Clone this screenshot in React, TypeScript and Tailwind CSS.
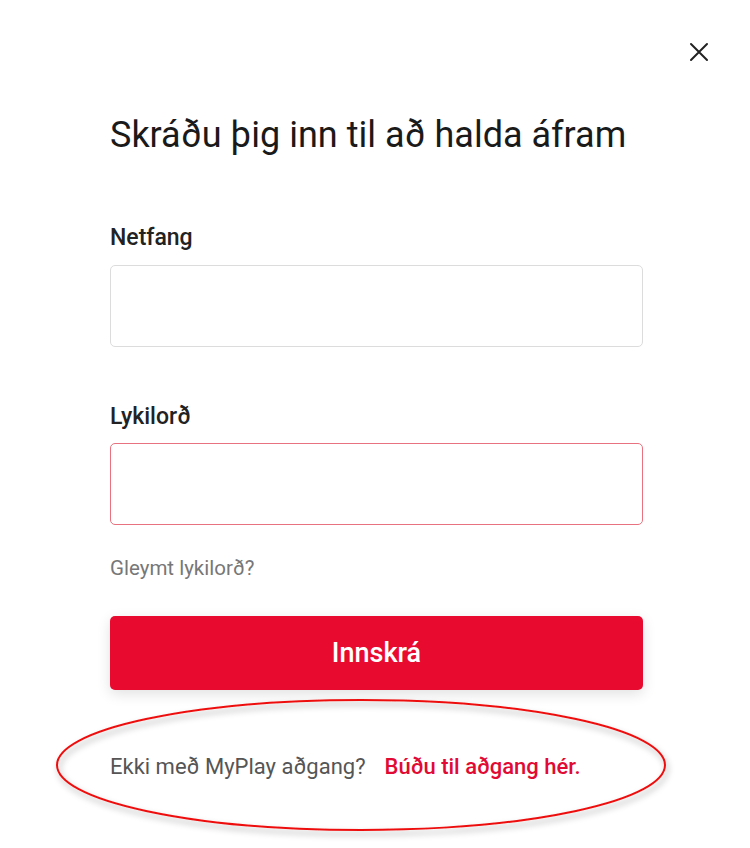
import React from "react";

function CloseIcon() {
  return (
    <svg width="20" height="20" viewBox="0 0 20 20" fill="none">
      <path d="M2 2L18 18M18 2L2 18" stroke="#222" strokeWidth="2" strokeLinecap="round" />
    </svg>
  );
}

function Annotation() {
  // red hand-drawn ellipse around the sign-up text
  return (
    <svg
      className="pointer-events-none absolute left-[50px] top-[694px]"
      width="630"
      height="148"
      viewBox="0 0 630 148"
    >
      <defs>
        <filter id="sh" x="-10%" y="-20%" width="120%" height="150%">
          <feDropShadow dx="2" dy="4" stdDeviation="3" floodColor="#000" floodOpacity="0.35" />
        </filter>
      </defs>
      <ellipse cx="311" cy="71" rx="304" ry="65" fill="none" stroke="#e11" strokeWidth="2" filter="url(#sh)" />
    </svg>
  );
}

export default function App() {
  return (
    <div
      className="relative h-[848px] w-[750px] overflow-hidden bg-white"
      style={{ fontFamily: "Roboto, 'Liberation Sans', sans-serif" }}
    >
      <div className="flex justify-end pr-[41px] pt-[42px]">
        <button className="flex h-5 w-5 items-center justify-center">
          <CloseIcon />
        </button>
      </div>

      <div className="ml-[110px] mr-[107px] mt-[51px] flex flex-col">
        <h1 className="text-[36px] leading-[44px] text-[#1a1a1a]">Skráðu þig inn til að halda áfram</h1>

        <label className="mt-[66px] text-[23px] font-medium leading-[30px] text-[#222]">Netfang</label>
        <input className="mt-[12px] h-[82px] w-full rounded-[5px] border border-[#dcdcdc] px-4 outline-none" />

        <label className="mt-[55px] text-[23px] font-medium leading-[30px] text-[#222]">Lykilorð</label>
        <input
          type="password"
          className="mt-[11px] h-[82px] w-full rounded-[5px] border border-[#e8727f] px-4 outline-none"
        />

        <a className="mt-[29px] text-[20.5px] leading-[28px] text-[#777]">Gleymt lykilorð?</a>

        <button className="mt-[34px] h-[74px] w-full rounded-[5px] bg-[#e90b2f] text-[27px] font-medium text-white shadow-[0_4px_14px_rgba(0,0,0,0.12)]">
          Innskrá
        </button>

        <p className="mt-[62px] text-[22px] leading-[30px] text-[#555]">
          Ekki með MyPlay aðgang?
          <a className="ml-[19px] font-medium text-[#e10a34]">Búðu til aðgang hér.</a>
        </p>
      </div>

      <Annotation />
    </div>
  );
}
